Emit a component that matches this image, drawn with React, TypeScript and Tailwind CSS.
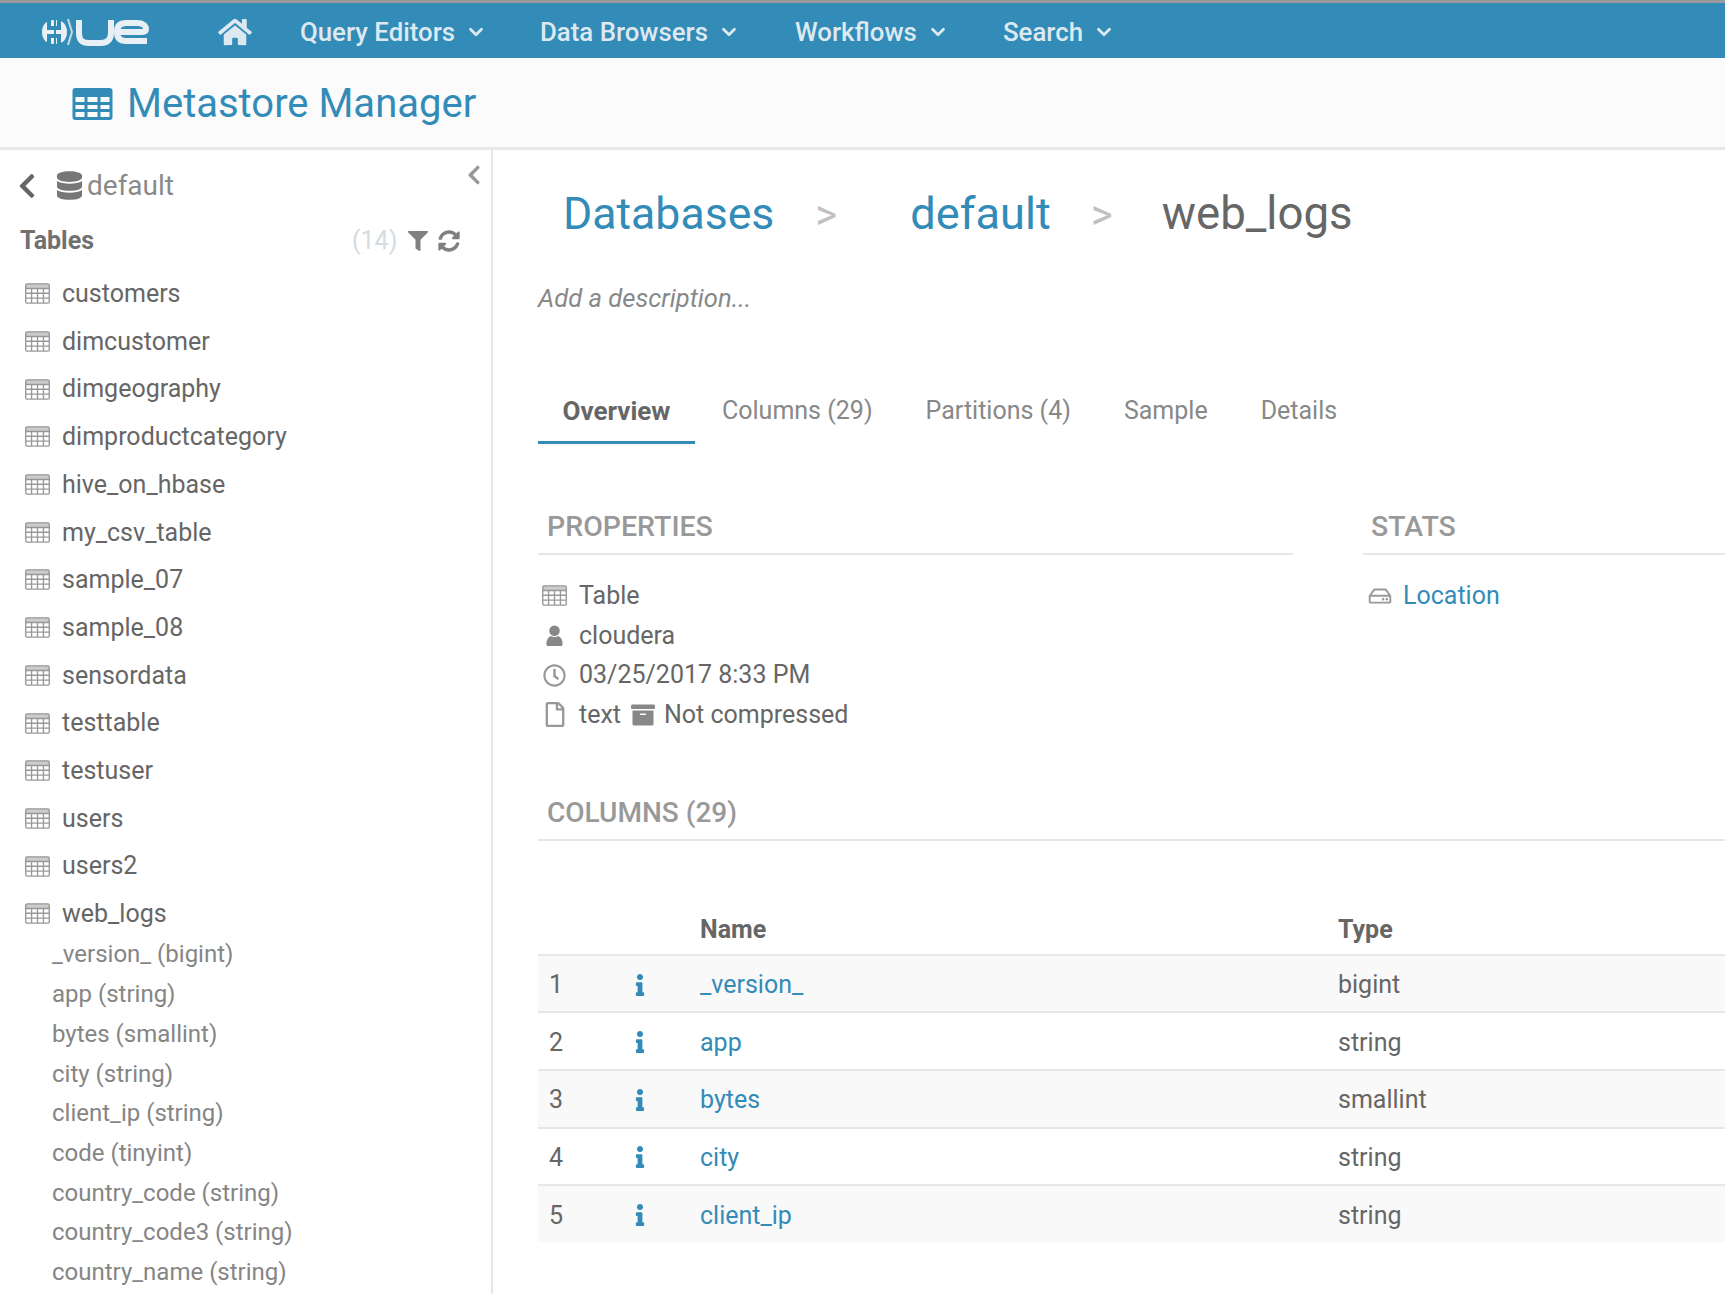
import React from 'react';
import { FaHome, FaDatabase, FaChevronLeft, FaFilter, FaSyncAlt, FaRegClock, FaRegFile, FaArchive, FaInfo, FaRegHdd } from 'react-icons/fa';
import { LuChevronDown } from 'react-icons/lu';

const tables = ['customers', 'dimcustomer', 'dimgeography', 'dimproductcategory', 'hive_on_hbase', 'my_csv_table', 'sample_07', 'sample_08', 'sensordata', 'testtable', 'testuser', 'users', 'users2', 'web_logs'];

const columns = ['_version_ (bigint)', 'app (string)', 'bytes (smallint)', 'city (string)', 'client_ip (string)', 'code (tinyint)', 'country_code (string)', 'country_code3 (string)', 'country_name (string)'];

const rows = [
    { name: '_version_', type: 'bigint' },
    { name: 'app', type: 'string' },
    { name: 'bytes', type: 'smallint' },
    { name: 'city', type: 'string' },
    { name: 'client_ip', type: 'string' },
];

const navItems = [
    { label: 'Query Editors', width: 'w-[240px]' },
    { label: 'Data Browsers', width: 'w-[255px]' },
    { label: 'Workflows', width: 'w-[208px]' },
    { label: 'Search', width: 'w-[130px]' },
];

const TableIcon = ({ className }: { className?: string }) => (
    <svg viewBox="0 0 24 20" className={className} fill="none" stroke="currentColor" strokeWidth="1.3">
        <rect x="0.7" y="0.7" width="22.6" height="18.6" rx="1.5" />
        <path d="M0.7 5.2H23.3M0.7 9.8H23.3M0.7 14.5H23.3M6.3 5V19M12 5V19M17.7 5V19" />
        <rect x="0.7" y="0.7" width="22.6" height="4.5" fill="currentColor" stroke="none" opacity="0.5" />
    </svg>
);

// solid table glyph used in the page title
const BigTableIcon = ({ className }: { className?: string }) => (
    <svg viewBox="0 0 40 32" className={className} fill="currentColor">
        <path
            fillRule="evenodd"
            d="M3 0H37A3 3 0 0 1 40 3V29A3 3 0 0 1 37 32H3A3 3 0 0 1 0 29V3A3 3 0 0 1 3 0ZM3 9V14H12V9ZM15 9V14H25V9ZM28 9V14H37V9ZM3 17V21H12V17ZM15 17V21H25V17ZM28 17V21H37V17ZM3 24V29H12V24ZM15 24V29H25V24ZM28 24V29H37V24Z"
        />
    </svg>
);

const UserIcon = ({ className }: { className?: string }) => (
    <svg viewBox="0 0 18 22" className={className} fill="currentColor">
        <circle cx="9" cy="6" r="5.5" />
        <path d="M5 11.5C2 13 1 15 0.5 19C0.3 21 1 22 3 22H15C17 22 17.7 21 17.5 19C17 15 16 13 13 11.5C11 13 7 13 5 11.5Z" />
    </svg>
);

const HueLogo = () => (
    <svg viewBox="0 0 110 32" className="w-[110px] h-[32px]" fill="none" stroke="#e8f0f5">
        <path d="M15 4C7 4 3 9 3 16C3 23 7 28 15 28Z" fill="#e8f0f5" stroke="none" />
        <path d="M17 4C24 4 28 9 28 16C28 23 24 28 17 28Z" fill="#e8f0f5" stroke="none" />
        <path d="M10 3V12H20V3M10 29V20H20V29" stroke="#338bb8" strokeWidth="4" />
        <path d="M29 3L33 16L29 29" strokeWidth="2" stroke="#c7dbe7" />
        <path d="M40 4V17C40 25 44 27 50 27H62C68 27 72 24 72 17V4" strokeWidth="6" />
        <path d="M108 25H87C81 25 78 22 78 16C78 10 81 7 87 7H98C104 7 107 10 107 13C107 15.5 105 16 102 16H79" strokeWidth="6" />
    </svg>
);

const App = () => {
    return (
        <div className="h-[1294px] w-[1725px] overflow-hidden bg-white font-['Roboto',sans-serif] text-[#6f6f6f] flex flex-col">
            {/* Top nav */}
            <div className="h-[58px] shrink-0 bg-[#338bb8] border-t-[3px] border-[#9a9a9a] flex items-center pl-[39px] pt-[3px] text-[#dce9f1]">
                <HueLogo />
                <FaHome className="ml-[69px] w-[34px] h-[30px]" />
                <div className="ml-[48px] flex items-center">
                    {navItems.map((item) => (
                        <div key={item.label} className={`${item.width} flex items-center gap-[10px] text-[25.8px] font-medium`}>
                            <span>{item.label}</span>
                            <LuChevronDown className="w-[22px] h-[22px]" strokeWidth={3} />
                        </div>
                    ))}
                </div>
            </div>

            {/* Page header */}
            <div className="h-[92px] shrink-0 bg-[#fbfbfb] border-b-[3px] border-[#e5e8ea] flex items-center pl-[72px] pt-[2px] gap-[14px] text-[#338bb8]">
                <BigTableIcon className="w-[41px] h-[32px]" />
                <span className="text-[40px]">Metastore Manager</span>
            </div>

            <div className="flex flex-1 min-h-0">
                {/* Sidebar */}
                <div className="w-[493px] shrink-0 border-r-2 border-[#e5e8ea] overflow-hidden">
                    <div className="relative h-[70px] flex items-center pl-[16px] pt-[1px]">
                        <FaChevronLeft className="w-[22px] h-[28px] text-[#666]" />
                        <FaDatabase className="ml-[19px] w-[25px] h-[29px] text-[#777]" />
                        <span className="ml-[5px] text-[28px] text-[#8a8a8a]">default</span>
                        <FaChevronLeft className="absolute left-[467px] top-[14px] w-[14px] h-[22px] text-[#999]" />
                    </div>
                    <div className="mt-[3px] h-[36px] flex items-center pl-[20px] text-[25px]">
                        <span className="font-bold w-[332px] text-[#707070]">Tables</span>
                        <span className="text-[#d5dbe0] w-[56px]">(14)</span>
                        <FaFilter className="w-[20px] h-[20px] text-[#808080]" />
                        <FaSyncAlt className="ml-[10px] w-[22px] h-[22px] text-[#808080]" />
                    </div>
                    <div className="mt-[11px]">
                        {tables.map((t) => (
                            <div key={t} className="h-[47.7px] flex items-center pl-[25px] gap-[12px] text-[25px] text-[#666]">
                                <TableIcon className="w-[25px] h-[21px] text-[#999] shrink-0" />
                                <span>{t}</span>
                            </div>
                        ))}
                    </div>
                    <div className="-mt-[3px]">
                        {columns.map((c) => (
                            <div key={c} className="h-[39.7px] flex items-center pl-[52px] text-[24px] text-[#858585]">
                                {c}
                            </div>
                        ))}
                    </div>
                </div>

                {/* Main */}
                <div className="flex-1 min-w-0 pl-[45px]">
                    <div className="h-[94px] pt-[34px] flex items-center pl-[25px] text-[44.6px]">
                        <span className="text-[#338bb8]">Databases</span>
                        <span className="ml-[41px] text-[42px] text-[#c0c0c0]">&gt;</span>
                        <span className="ml-[73px] text-[45.2px] text-[#338bb8]">default</span>
                        <span className="ml-[40px] text-[42px] text-[#c0c0c0]">&gt;</span>
                        <span className="ml-[49px] text-[45.6px] text-[#666]">web_logs</span>
                    </div>
                    <div className="mt-[34px] h-[40px] flex items-center text-[25.6px] italic text-[#888]">Add a description...</div>

                    {/* Tabs */}
                    <div className="mt-[63px] flex items-center text-[25px] text-[#888]">
                        <div className="w-[157px] h-[63px] flex items-center justify-center text-[26px] font-bold text-[#666] border-b-[3px] border-[#338bb8]">Overview</div>
                        <div className="ml-[27px] h-[63px] flex items-center border-b-[3px] border-transparent">Columns (29)</div>
                        <div className="ml-[53px] h-[63px] flex items-center border-b-[3px] border-transparent">Partitions (4)</div>
                        <div className="ml-[53px] h-[63px] flex items-center border-b-[3px] border-transparent">Sample</div>
                        <div className="ml-[53px] h-[63px] flex items-center border-b-[3px] border-transparent">Details</div>
                    </div>

                    {/* Properties + stats */}
                    <div className="mt-[63px] flex">
                        <div className="w-[755px]">
                            <div className="text-[28.5px] font-medium text-[#999] pl-[9px] pb-[6px] border-b-2 border-[#e5e8ea] h-[48px] flex items-center">PROPERTIES</div>
                            <div className="mt-[21px] text-[25px] text-[#666]">
                                <div className="h-[39.7px] flex items-center">
                                    <TableIcon className="ml-[4px] w-[25px] h-[21px] text-[#999]" />
                                    <span className="ml-[12px]">Table</span>
                                </div>
                                <div className="h-[39.7px] flex items-center">
                                    <UserIcon className="ml-[7px] w-[19px] h-[21px] text-[#888]" />
                                    <span className="ml-[15px]">cloudera</span>
                                </div>
                                <div className="h-[39.7px] flex items-center">
                                    <FaRegClock className="ml-[5px] w-[23px] h-[23px] text-[#999]" />
                                    <span className="ml-[13px]">03/25/2017 8:33 PM</span>
                                </div>
                                <div className="h-[39.7px] flex items-center">
                                    <FaRegFile className="ml-[6px] w-[22px] h-[25px] text-[#999]" />
                                    <span className="ml-[13px]">text</span>
                                    <FaArchive className="ml-[10px] w-[24px] h-[24px] text-[#888]" />
                                    <span className="ml-[9px]">Not compressed</span>
                                </div>
                            </div>
                        </div>
                        <div className="ml-[70px] flex-1">
                            <div className="text-[28.5px] font-medium text-[#999] pl-[8px] pb-[6px] border-b-2 border-[#e5e8ea] h-[48px] flex items-center">STATS</div>
                            <div className="mt-[21px] h-[39.7px] flex items-center text-[25px] text-[#338bb8]">
                                <FaRegHdd className="ml-[5px] w-[24px] h-[20px] text-[#999]" />
                                <span className="ml-[11px]">Location</span>
                            </div>
                        </div>
                    </div>

                    {/* Columns */}
                    <div className="mt-[58px] text-[28px] font-medium text-[#999] pl-[9px] pb-[6px] border-b-2 border-[#e5e8ea] h-[48px] flex items-center">COLUMNS (29)</div>
                    <div className="mt-[49px] text-[25px]">
                        <div className="h-[66px] pb-[5px] flex items-end font-bold text-[#666] border-b-2 border-[#e5e8ea]">
                            <div className="w-[162px]" />
                            <div className="w-[638px]">Name</div>
                            <div>Type</div>
                        </div>
                        {rows.map((r, i) => (
                            <div key={r.name} className={`pt-[3px] flex items-center ${i < rows.length - 1 ? 'h-[57.6px] border-b-2 border-[#e5e8ea]' : 'h-[55.6px]'} ${i % 2 === 0 ? 'bg-[#f9f9f9]' : 'bg-white'}`}>
                                <div className="w-[92px] pl-[11px] text-[#666]">{i + 1}</div>
                                <div className="w-[70px] text-[#338bb8]"><FaInfo className="ml-[2px] -mt-[1px] w-[16px] h-[22px]" /></div>
                                <div className="w-[638px] text-[#338bb8]">{r.name}</div>
                                <div className="text-[#666]">{r.type}</div>
                            </div>
                        ))}
                    </div>
                </div>
            </div>
        </div>
    );
};

export default App;
